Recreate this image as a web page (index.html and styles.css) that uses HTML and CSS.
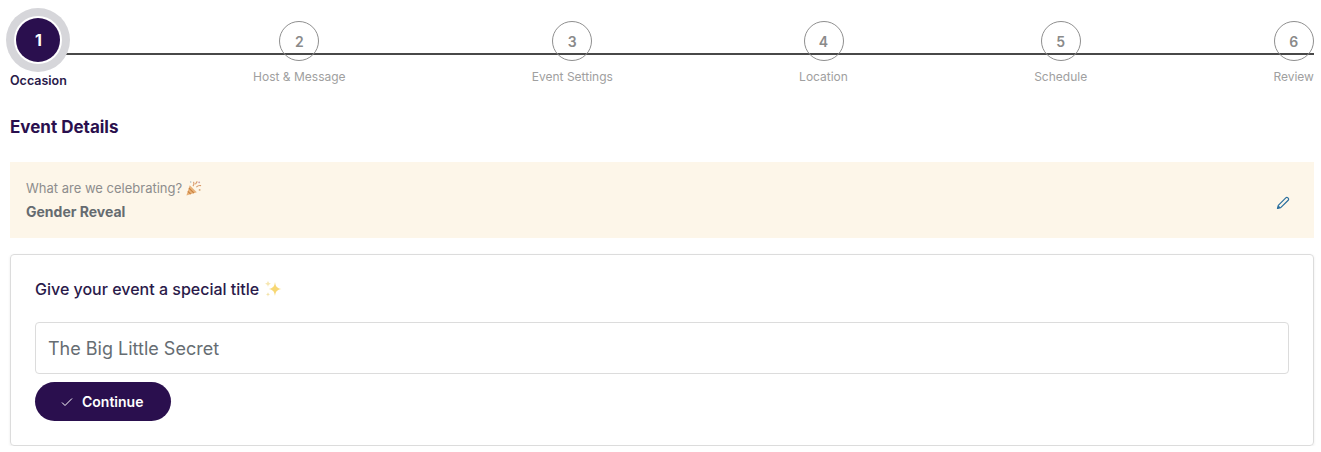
FILE: index.html
```html
<!DOCTYPE html>
<html lang="en">
<head>
    <meta charset="UTF-8">
    <meta name="viewport" content="width=device-width, initial-scale=1.0">
    <title>Event Details</title>
    <link rel="stylesheet" href="styles.css">
</head>
<body>
    <div class="stepper">
        <div class="stepper-line"></div>
        <div class="step step-active">
            <div class="step-circle">1</div>
            <div class="step-label">Occasion</div>
        </div>
        <div class="step">
            <div class="step-circle">2</div>
            <div class="step-label">Host &amp; Message</div>
        </div>
        <div class="step">
            <div class="step-circle">3</div>
            <div class="step-label">Event Settings</div>
        </div>
        <div class="step">
            <div class="step-circle">4</div>
            <div class="step-label">Location</div>
        </div>
        <div class="step">
            <div class="step-circle">5</div>
            <div class="step-label">Schedule</div>
        </div>
        <div class="step">
            <div class="step-circle">6</div>
            <div class="step-label">Review</div>
        </div>
    </div>

    <h2 class="section-title">Event Details</h2>

    <div class="occasion-box">
        <div>
            <div class="occasion-question">
                What are we celebrating?
                <svg class="emoji" viewBox="0 0 18 18" width="17" height="17">
                    <path d="M1.5 16.5 5 5.5l7.5 7.5z" fill="#e8b27a"/>
                    <path d="M3 12l3 3M4.2 8.5l5.3 5.3" stroke="#c9813f" stroke-width="1.2"/>
                    <path d="M9 2c1 1.500 .5 3-.5 4.500M12 7.500c1.500-1.500 3-2 5-1.500M11 4.500l2-3" stroke="#d99a6a" stroke-width="1.200" fill="none"/>
                    <circle cx="15" cy="2.500" r="1" fill="#c9a0b0"/>
                    <circle cx="15.500" cy="10.500" r="1" fill="#d8a878"/>
                    <circle cx="6" cy="2" r=".8" fill="#a8b8c0"/>
                </svg>
            </div>
            <div class="occasion-value">Gender Reveal</div>
        </div>
        <svg class="edit-icon" viewBox="0 0 14 14" width="14" height="14">
            <path d="M1.500 12.500 2.300 9.300 9.800 1.800a1.400 1.400 0 0 1 2 0l.4.400a1.400 1.400 0 0 1 0 2L4.700 11.700z" fill="none" stroke="#2b6f9e" stroke-width="1.200" stroke-linejoin="round"/>
            <path d="M1.500 12.500 2.300 9.300 4.700 11.700z" fill="#2b6f9e"/>
        </svg>
    </div>

    <div class="title-card">
        <div class="title-prompt">
            Give your event a special title
            <svg class="emoji" viewBox="0 0 20 20" width="20" height="20">
                <path d="M12 3c.6 4.500 2 6.200 6.500 7-4.500.8-5.900 2.500-6.500 7-.6-4.500-2-6.200-6.500-7 4.500-.8 5.900-2.500 6.500-7z" fill="#f7d774"/>
                <path d="M5 1.500c.3 2 1 2.800 3 3.200-2 .4-2.700 1.200-3 3.200-.3-2-1-2.800-3-3.200 2-.4 2.700-1.200 3-3.200z" fill="#f6e6b0"/>
                <path d="M5 13c.2 1.500.8 2.100 2.200 2.300C5.800 15.600 5.200 16.200 5 17.700c-.2-1.500-.8-2.100-2.200-2.400C4.200 15.100 4.800 14.500 5 13z" fill="#f3e2a8"/>
            </svg>
        </div>
        <input class="title-input" type="text" value="The Big Little Secret">
        <button class="continue-button" type="button">
            <svg viewBox="0 0 12 10" width="12" height="10">
                <path d="M1 5.500 4 8.500 11 1.500" fill="none" stroke="#fff" stroke-width="1"/>
            </svg>
            Continue
        </button>
    </div>
</body>
</html>
```

FILE: styles.css
```css
body, input, button {
    box-sizing: border-box;
}

body {
    font-family: Inter, "Open Sans", sans-serif;
    margin: 0;
    padding: 0 7px 0 10px;
    background-color: #fff;
    overflow: hidden;
}

.stepper {
    position: relative;
    display: flex;
    justify-content: space-between;
    align-items: flex-start;
    height: 91px;
}

.stepper-line {
    position: absolute;
    left: 0;
    right: 0;
    top: 53px;
    height: 2px;
    background-color: #484848;
}

.step {
    position: relative;
    display: flex;
    flex-direction: column;
    align-items: center;
}

.step-circle {
    width: 40px;
    height: 40px;
    margin-top: 21px;
    border: 1px solid #8f8f8f;
    border-radius: 50%;
    box-sizing: border-box;
    display: flex;
    align-items: center;
    justify-content: center;
    font-size: 14px;
    font-weight: 600;
    color: #8a8a8a;
}

.step-label {
    margin-top: 6px;
    font-size: 12px;
    line-height: 20px;
    color: #a0a0a0;
    white-space: nowrap;
}

.step-active .step-circle {
    width: 44px;
    height: 44px;
    margin-top: 18px;
    border: none;
    background-color: #2a0f4e;
    color: #fff;
    font-size: 16px;
    font-weight: 700;
    box-shadow: 0 0 0 2px #fff, 0 0 0 10px #d6d6da;
}

.step-active .step-label {
    margin-top: 9px;
    font-size: 12.500px;
    font-weight: 600;
    color: #2a1a4a;
}

.section-title {
    margin: 24px 0 23px;
    font-size: 17px;
    line-height: 24px;
    font-weight: 700;
    color: #2a0f4e;
}

.occasion-box {
    display: flex;
    justify-content: space-between;
    align-items: center;
    height: 76px;
    padding: 0 24px 0 16px;
    background-color: #fdf6e9;
}

.occasion-question {
    display: flex;
    align-items: center;
    gap: 3px;
    font-size: 13px;
    line-height: 20px;
    color: #8d8d8d;
}

.occasion-value {
    margin-top: 4px;
    font-size: 14px;
    line-height: 20px;
    font-weight: 700;
    color: #656b70;
}

.edit-icon {
    margin-top: 6px;
}

.title-card {
    margin-top: 16px;
    height: 192px;
    padding: 24px;
    border: 1px solid #dcdcdc;
    border-radius: 4px;
    box-shadow: 0 1px 3px rgba(0, 0, 0, 0.08);
    box-sizing: border-box;
}

.title-prompt {
    display: flex;
    align-items: center;
    gap: 4px;
    font-size: 16px;
    line-height: 20px;
    font-weight: 500;
    color: #2a1a4a;
}

.title-input {
    display: block;
    width: 100%;
    height: 52px;
    margin-top: 23px;
    padding: 0 12px;
    border: 1px solid #dcdcdc;
    border-radius: 4px;
    font-family: inherit;
    font-size: 18px;
    color: #666d72;
    outline: none;
}

.continue-button {
    display: flex;
    align-items: center;
    gap: 9px;
    height: 39px;
    width: 136px;
    margin-top: 8px;
    padding: 0 0 0 26px;
    border: none;
    border-radius: 20px;
    background-color: #2a0f4e;
    color: #fff;
    font-family: inherit;
    font-size: 14px;
    font-weight: 600;
    cursor: pointer;
}
```
